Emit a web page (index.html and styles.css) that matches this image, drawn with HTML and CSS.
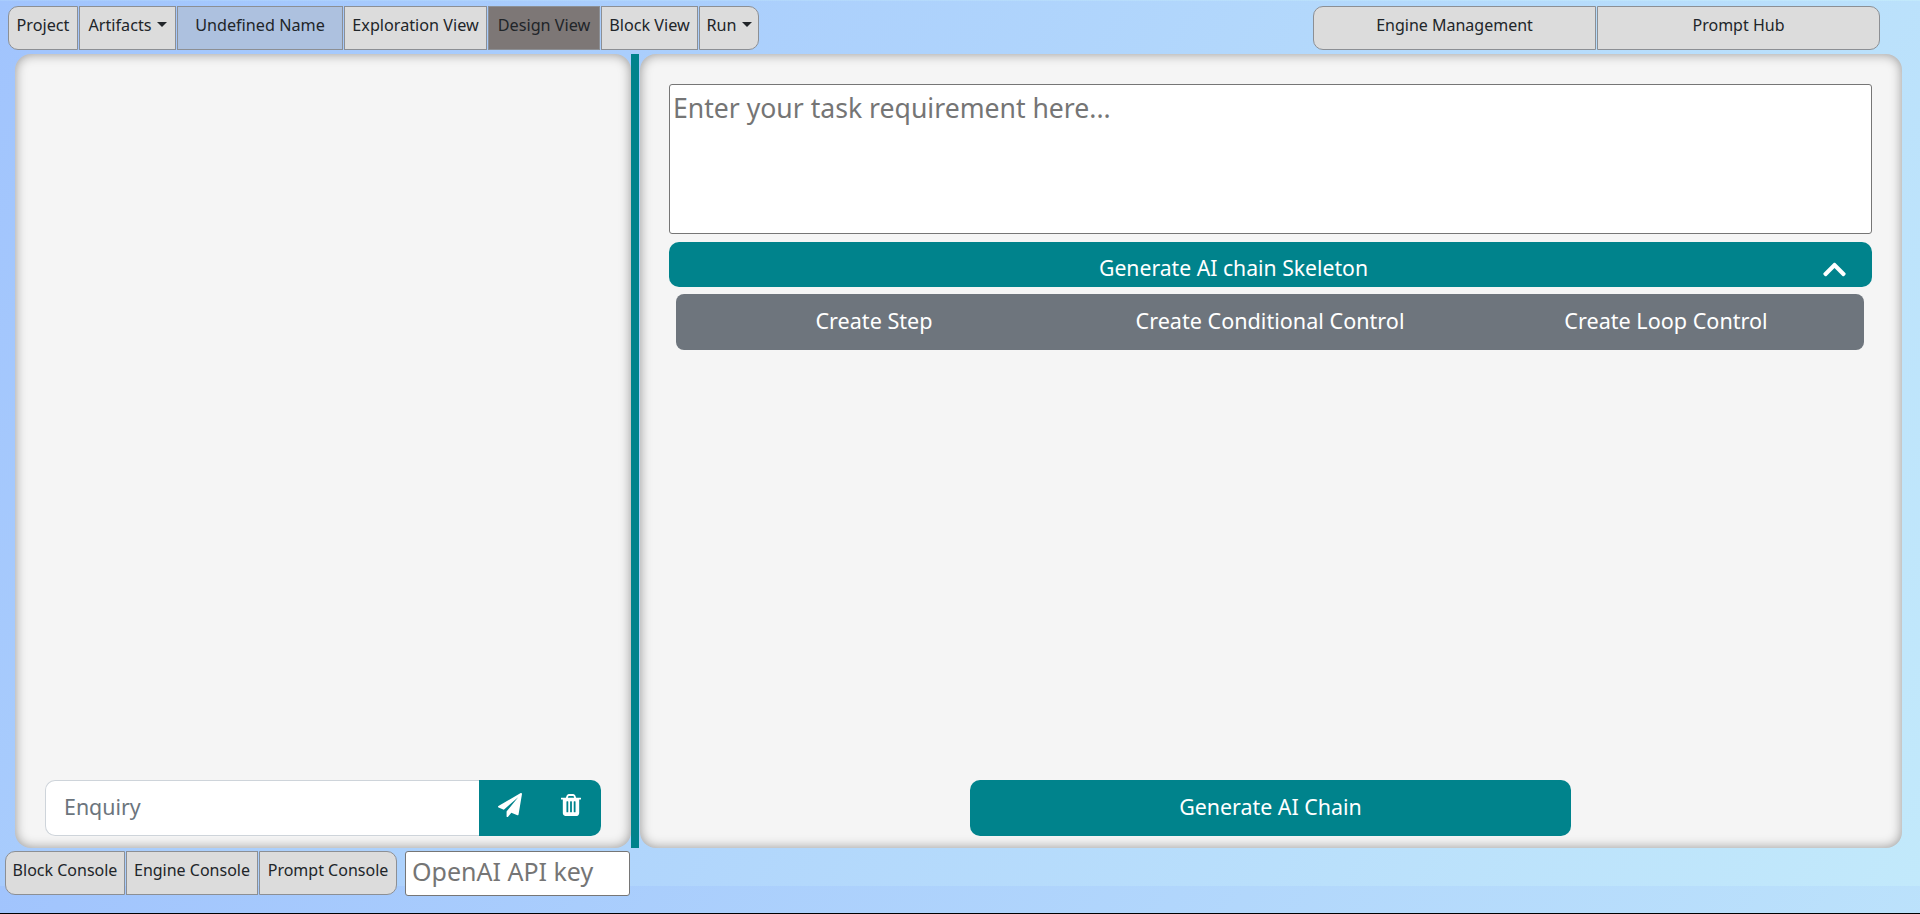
FILE: index.html
```html
<!DOCTYPE html>
<html lang="en">
<head>
  <meta charset="UTF-8" />
  <title>AI Chain Workshop</title>
  <meta name="viewport" content="width=device-width, initial-scale=1" />
  <link rel="stylesheet" href="styles.css">
</head>
<body>
  <div class="page">
    <nav class="toolbar">
      <div class="btnGroup viewGroup">
        <button class="toolBtn wProject">Project</button>
        <button class="toolBtn wArtifacts caret">Artifacts</button>
        <button class="toolBtn wName nameBtn">Undefined Name</button>
        <button class="toolBtn wExplore">Exploration View</button>
        <button class="toolBtn wDesign activeBtn">Design View</button>
        <button class="toolBtn wBlock">Block View</button>
        <button class="toolBtn wRun caret">Run</button>
      </div>
      <div class="btnGroup">
        <button class="toolBtn wHub">Engine Management</button>
        <button class="toolBtn wHub">Prompt Hub</button>
      </div>
    </nav>

    <main class="workspace">
      <section class="panel chatPanel">
        <div class="enquiry">
          <input class="enquiryInput" type="text" placeholder="Enquiry" autocomplete="off" />
          <div class="enquiryActions">
            <svg class="sendIcon" viewBox="0 0 1792 1792"><path d="M1764 11q33 24 27 64l-256 1536q-5 29-32 45-14 8-31 8-11 0-24-5l-453-185-242 295q-18 23-49 23-13 0-22-4-19-7-30.5-23.5t-11.5-36.5v-349l864-1059-1069 925-395-162q-37-14-40-55-2-40 32-59l1664-960q15-9 32-9 20 0 36 11z"/></svg>
            <svg class="trashIcon" viewBox="192 128 1408 1536"><path d="M704 1376v-704q0-14-9-23t-23-9h-64q-14 0-23 9t-9 23v704q0 14 9 23t23 9h64q14 0 23-9t9-23zm256 0v-704q0-14-9-23t-23-9h-64q-14 0-23 9t-9 23v704q0 14 9 23t23 9h64q14 0 23-9t9-23zm256 0v-704q0-14-9-23t-23-9h-64q-14 0-23 9t-9 23v704q0 14 9 23t23 9h64q14 0 23-9t9-23zm-544-992h448l-48-117q-7-9-17-11h-317q-10 2-17 11zm928 32v64q0 14-9 23t-23 9h-96v948q0 83-47 143.5t-113 60.5h-832q-66 0-113-58.5t-47-141.5v-952h-96q-14 0-23-9t-9-23v-64q0-14 9-23t23-9h309l70-167q15-37 54-63t79-26h320q40 0 79 26t54 63l70 167h309q14 0 23 9t9 23z"/></svg>
          </div>
        </div>
      </section>

      <div class="divider"></div>

      <section class="panel designPanel">
        <textarea class="taskInput" placeholder="Enter your task requirement here..."></textarea>
        <div class="skeletonBar">
          <span>Generate AI chain Skeleton</span>
          <svg class="chevron" viewBox="0 120 448 272"><path d="M240.971 130.524l194.343 194.343c9.373 9.373 9.373 24.569 0 33.941l-22.667 22.667c-9.357 9.357-24.522 9.375-33.901.04L224 227.495 69.255 381.516c-9.379 9.335-24.544 9.317-33.901-.04l-22.667-22.667c-9.373-9.373-9.373-24.569 0-33.941L207.03 130.525c9.372-9.373 24.568-9.373 33.941-.001z"/></svg>
        </div>
        <div class="createBar">
          <span>Create Step</span>
          <span>Create Conditional Control</span>
          <span>Create Loop Control</span>
        </div>
        <button class="generateBtn">Generate AI Chain</button>
      </section>
    </main>

    <footer class="consoleBar">
      <div class="btnGroup">
        <button class="toolBtn wBlockCon">Block Console</button>
        <button class="toolBtn wEngineCon">Engine Console</button>
        <button class="toolBtn wPromptCon">Prompt Console</button>
      </div>
      <input class="apiKey" type="text" placeholder="OpenAI API key" autocomplete="off" />
    </footer>
  </div>
</body>
</html>
```

FILE: styles.css
```css
/* Page shell */
html {
  background: linear-gradient(120deg, #a1c4fd, #c2e9fb) 0 1px / 100% 885px repeat;
}
body {
  margin: 0;
  color: #212529;
  font-family: "Noto Sans", "Open Sans", sans-serif;
}
.page {
  box-sizing: border-box;
  height: 914px;
  display: flex;
  flex-direction: column;
  border-bottom: 1px solid #000;
}

/* Button rows */
.toolbar {
  display: flex;
  justify-content: space-between;
  height: 44px;
  margin-top: 6px;
  padding: 0 40px 0 8px;
}
.btnGroup {
  display: flex;
  gap: 1px;
}
.toolBtn {
  box-sizing: border-box;
  height: 100%;
  padding: 0 0 6px;
  background: #dcdcdc;
  border: 1px solid #8c8f94;
  border-radius: 0;
  color: #212529;
  font-family: inherit;
  font-size: 16px;
  white-space: nowrap;
}
.viewGroup .toolBtn {
  font-size: 16.2px;
}
.btnGroup .toolBtn:first-child {
  border-radius: 10px 0 0 10px;
}
.btnGroup .toolBtn:last-child {
  border-radius: 0 10px 10px 0;
}
.wProject { width: 70px; }
.wArtifacts { width: 97px; }
.wName { width: 166px; }
.wExplore { width: 143px; }
.wDesign { width: 112px; }
.wBlock { width: 97px; }
.wRun { width: 60px; }
.wHub { width: 283px; }
.wBlockCon { width: 120px; }
.wEngineCon { width: 132px; }
.wPromptCon { width: 138px; }
.nameBtn {
  background: #adc1df;
}
.activeBtn {
  background: #7d7776;
}
.caret::after {
  content: "";
  display: inline-block;
  margin-left: 5px;
  vertical-align: 4px;
  border-top: 5px solid #212529;
  border-left: 5px solid transparent;
  border-right: 5px solid transparent;
}

/* Main area */
.workspace {
  display: flex;
  height: 794px;
  margin: 4px 18px 0 15px;
}
.panel {
  box-sizing: border-box;
  display: flex;
  flex-direction: column;
  background: #f5f5f5;
  border-radius: 16px;
  box-shadow: inset 0 0 12px rgb(0 0 0 / 0.4);
}
.chatPanel {
  width: 616px;
  justify-content: flex-end;
  padding: 0 30px 12px;
}
.divider {
  width: 8px;
  background: #00838c;
}
.designPanel {
  flex-grow: 1;
  margin-left: 1px;
  padding: 30px 30px 12px 29px;
}

/* Enquiry box */
.enquiry {
  display: flex;
  height: 56px;
}
.enquiryInput {
  flex-grow: 1;
  min-width: 0;
  padding: 0 18px 4px;
  background: #fff;
  border: 1px solid #ced4da;
  border-right: none;
  border-radius: 10px 0 0 10px;
  color: #495057;
  font-family: inherit;
  font-size: 21.4px;
  outline: none;
}
.enquiryInput::placeholder {
  color: #6c757d;
}
.enquiryActions {
  width: 122px;
  display: flex;
  align-items: center;
  justify-content: space-between;
  padding: 0 20px 6px 19px;
  box-sizing: border-box;
  background: #00838c;
  border-radius: 0 10px 10px 0;
}
.sendIcon {
  width: 24px;
  height: 24px;
  fill: #fff;
}
.trashIcon {
  width: 20px;
  height: 24px;
  fill: #fff;
}

/* Design panel */
.taskInput {
  box-sizing: border-box;
  width: 100%;
  height: 150px;
  padding: 5px 3px;
  background: #fff;
  border: 1px solid #767676;
  border-radius: 3px;
  color: #212529;
  font-family: inherit;
  font-size: 26.6px;
  resize: none;
  outline: none;
}
.taskInput::placeholder {
  color: #757575;
}
.skeletonBar {
  position: relative;
  box-sizing: border-box;
  width: 100%;
  height: 45px;
  margin-top: 8px;
  padding: 11px 74px 0 0;
  background: #00838c;
  border-radius: 10px;
  color: #fff;
  font-size: 21.2px;
  text-align: center;
}
.chevron {
  position: absolute;
  right: 26px;
  top: 20px;
  width: 23px;
  height: 15px;
  fill: #fff;
}
.createBar {
  box-sizing: border-box;
  width: 1188px;
  height: 56px;
  margin: 7px 0 0 7px;
  padding-bottom: 4px;
  display: grid;
  grid-template-columns: repeat(3, 1fr);
  align-items: center;
  background: #6e757d;
  border-radius: 8px;
  color: #fff;
  font-size: 21.6px;
  text-align: center;
}
.generateBtn {
  align-self: center;
  width: 601px;
  height: 56px;
  margin-top: auto;
  padding-bottom: 4px;
  background: #00838c;
  border: none;
  border-radius: 10px;
  color: #fff;
  font-family: inherit;
  font-size: 21.4px;
}

/* Bottom console row */
.consoleBar {
  display: flex;
  height: 44px;
  margin-top: 3px;
  padding-left: 5px;
  gap: 8px;
}
.apiKey {
  box-sizing: border-box;
  width: 225px;
  height: 45px;
  padding: 0 6px 5px;
  background: #fff;
  border: 1px solid #767676;
  border-radius: 3px;
  font-family: inherit;
  font-size: 25px;
  outline: none;
}
.apiKey::placeholder {
  color: #757575;
}
```
